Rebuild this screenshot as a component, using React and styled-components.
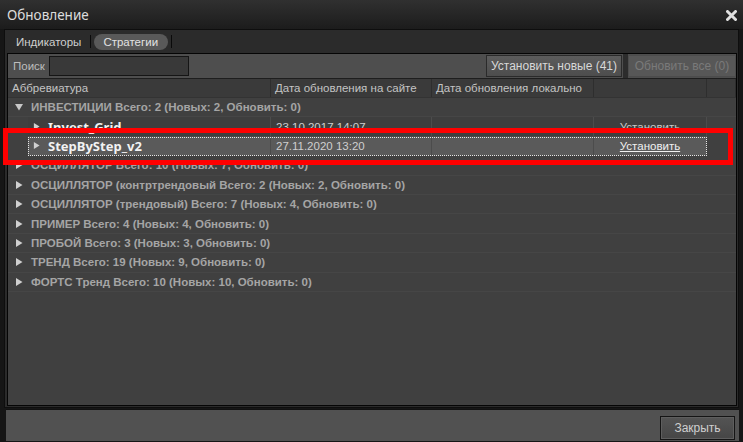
import React from 'react'
import styled, { createGlobalStyle, css } from 'styled-components'

const GlobalStyle = createGlobalStyle`
  html, body {
    margin: 0;
    padding: 0;
    background: #141414;
  }
  body {
    font-family: 'Liberation Sans', Arial, sans-serif;
    font-size: 12px;
    color: #d0d0d0;
  }
  * {
    box-sizing: border-box;
  }
`

const Window = styled.div`
  position: relative;
  width: 743px;
  height: 442px;
  display: flex;
  flex-direction: column;
  background: #161616;
  overflow: hidden;
`

const TitleBar = styled.div`
  height: 29px;
  flex: none;
  display: flex;
  align-items: center;
  justify-content: space-between;
  padding: 0 6px 0 7px;
  background: linear-gradient(#303030, #1c1c1c);
  color: #dcdcdc;
  font-family: 'Noto Sans', sans-serif;
  font-size: 13.5px;
`

const CloseIcon = styled.svg`
  width: 11px;
  height: 11px;
  margin-top: 1px;
`

const Body = styled.div`
  flex: 1;
  display: flex;
  flex-direction: column;
  gap: 1px;
  padding: 0 4px 1px 4px;
  min-height: 0;
`

const Main = styled.div`
  flex: 1;
  display: flex;
  flex-direction: column;
  background: #2b2b2b;
  border: 1px solid #0e0e0e;
  min-height: 0;
`

const TabRow = styled.div`
  height: 23px;
  flex: none;
  display: flex;
  align-items: center;
  padding-left: 5px;
`

const Tab = styled.div`
  height: 16px;
  display: flex;
  align-items: center;
  padding: 0 6px;
  border-radius: 8px;
  color: #cfcfcf;
  font-size: 11.5px;
  ${({ $active }) =>
    $active &&
    css`
      background: #595959;
      color: #e2e2e2;
      padding: 0 10px 0 9px;
    `}
`

const TabSep = styled.div`
  width: 1px;
  height: 13px;
  margin: 0 3px;
  background: #0a0a0a;
`

const Panel = styled.div`
  flex: 1;
  display: flex;
  flex-direction: column;
  margin: 0 1px 1px 2px;
  border: 1px solid #050505;
  background: #404040;
  min-height: 0;
`

const Toolbar = styled.div`
  height: 25px;
  flex: none;
  display: flex;
  align-items: center;
  padding-left: 5px;
  background: #4e4e4e;
  border-bottom: 1px solid #1e1e1e;
`

const Label = styled.span`
  color: #bdbdbd;
  font-size: 11.5px;
  margin-right: 4px;
`

const SearchInput = styled.input`
  width: 140px;
  height: 20px;
  background: #393939;
  border: 1px solid #151515;
  outline: none;
  color: #ddd;
`

const Spacer = styled.div`
  flex: 1;
`

const Button = styled.button`
  width: ${({ $w }) => $w}px;
  height: 22px;
  padding: 0;
  font-family: 'Liberation Sans', Arial, sans-serif;
  font-size: 12px;
  color: #d8d8d8;
  background: linear-gradient(#5c5c5c, #4d4d4d);
  border: 1px solid #2a2a2a;
  ${({ $disabled }) =>
    $disabled &&
    css`
      color: #7a7a7a;
      background: #575757;
      border-color: #4c4c4c;
    `}
`

const ToolSep = styled.div`
  width: 5px;
  height: 24px;
  background: #2c2c2c;
  margin: 0 0 0 1px;
`

const Table = styled.div`
  flex: 1;
  display: flex;
  flex-direction: column;
  min-height: 0;
`

const HeaderRow = styled.div`
  height: 19px;
  flex: none;
  display: grid;
  grid-template-columns: 263px 161px 162px 113px 1fr;
  background: #3a3a3a;
  border-bottom: 1px solid #333;
`

const HeaderCell = styled.div`
  display: flex;
  align-items: center;
  padding-left: 4px;
  color: #c4c4c4;
  font-size: 11.5px;
  white-space: nowrap;
  border-right: 1px solid #2e2e2e;
`

const GroupRow = styled.div`
  height: 19.4px;
  flex: none;
  display: flex;
  align-items: center;
  padding-left: 7px;
  gap: 8px;
  color: #a5a5a5;
  font-weight: bold;
  font-size: 11.5px;
  white-space: nowrap;
  border-bottom: 1px solid #464646;
`

const ItemRow = styled.div`
  height: 19.4px;
  flex: none;
  display: grid;
  grid-template-columns: 243px 161px 162px 113px;
  margin-left: 20px;
  width: 679px;
  background: ${({ $selected }) => ($selected ? '#5a5a5a' : '#3e3e3e')};
  outline: ${({ $selected }) => ($selected ? '1px dotted #e6e6e6' : 'none')};
  outline-offset: -1px;
  border-bottom: 1px solid #4a4a4a;
`

const Cell = styled.div`
  display: flex;
  align-items: center;
  justify-content: ${({ $center }) => ($center ? 'center' : 'flex-start')};
  padding-left: ${({ $center }) => ($center ? '0' : '5px')};
  gap: 8px;
  border-right: 1px solid #4c4c4c;
  color: #cfcfcf;
  font-size: 11.5px;
  white-space: nowrap;
  overflow: hidden;
`

const Name = styled.span`
  color: #f2f2f2;
  font-family: 'Noto Sans', sans-serif;
  font-weight: bold;
  font-size: 13px;
`

const Link = styled.span`
  color: ${({ $active }) => ($active ? '#f0f0f0' : '#c8c8c8')};
  text-decoration: ${({ $active }) => ($active ? 'underline' : 'none')};
`

const Arrow = styled.svg`
  flex: none;
  width: ${({ $size }) => $size}px;
  height: ${({ $size }) => $size}px;
`

const Footer = styled.div`
  height: 32px;
  flex: none;
  display: flex;
  align-items: center;
  justify-content: flex-end;
  padding: 4px 4px 0 0;
  margin-left: 2px;
  background: #515151;
  border-top: 1px solid #111;
`

const CloseButton = styled.button`
  width: 75px;
  height: 24px;
  font-family: 'Liberation Sans', Arial, sans-serif;
  font-size: 12px;
  color: #cfcfcf;
  background: linear-gradient(#545454, #464646);
  border: 1px solid #151515;
  box-shadow: inset 0 0 0 1px #5e5e5e;
`

const Highlight = styled.div`
  position: absolute;
  left: 3px;
  top: 128px;
  width: 730px;
  height: 37px;
  border: 5px solid #ff0000;
  pointer-events: none;
`

const Tri = ({ open, size = 8 }) => (
  <Arrow $size={size} viewBox="0 0 8 8">
    {open ? (
      <polygon points="0,1 8,1 4,7.5" fill="#c8c8c8" />
    ) : (
      <polygon points="1,0 7.5,4 1,8" fill="#d0d0d0" />
    )}
  </Arrow>
)

const groups = [
  'ОСЦИЛЛЯТОР Всего: 10 (Новых: 7, Обновить: 0)',
  'ОСЦИЛЛЯТОР (контртрендовый Всего: 2 (Новых: 2, Обновить: 0)',
  'ОСЦИЛЛЯТОР (трендовый) Всего: 7 (Новых: 4, Обновить: 0)',
  'ПРИМЕР Всего: 4 (Новых: 4, Обновить: 0)',
  'ПРОБОЙ Всего: 3 (Новых: 3, Обновить: 0)',
  'ТРЕНД Всего: 19 (Новых: 9, Обновить: 0)',
  'ФОРТС Тренд Всего: 10 (Новых: 10, Обновить: 0)',
]

const items = [
  { name: 'Invest_Grid', date: '23.10.2017 14:07' },
  { name: 'StepByStep_v2', date: '27.11.2020 13:20', selected: true },
]

export default function App() {
  return (
    <Window>
      <GlobalStyle />
      <TitleBar>
        <span>Обновление</span>
        <CloseIcon viewBox="0 0 11 11">
          <path d="M1.5 1.5 L9.5 9.5 M9.5 1.5 L1.5 9.5" stroke="#e0e0e0" strokeWidth="3" strokeLinecap="round" />
        </CloseIcon>
      </TitleBar>
      <Body>
        <Main>
          <TabRow>
            <Tab>Индикаторы</Tab>
            <TabSep />
            <Tab $active>Стратегии</Tab>
            <TabSep />
          </TabRow>
          <Panel>
            <Toolbar>
              <Label>Поиск</Label>
              <SearchInput />
              <Spacer />
              <Button $w={136}>Установить новые (41)</Button>
              <ToolSep />
              <Button $w={108} $disabled>
                Обновить все (0)
              </Button>
            </Toolbar>
            <Table>
              <HeaderRow>
                <HeaderCell>Аббревиатура</HeaderCell>
                <HeaderCell>Дата обновления на сайте</HeaderCell>
                <HeaderCell>Дата обновления локально</HeaderCell>
                <HeaderCell />
                <HeaderCell />
              </HeaderRow>
              <GroupRow>
                <Tri open />
                ИНВЕСТИЦИИ Всего: 2 (Новых: 2, Обновить: 0)
              </GroupRow>
              {items.map((it) => (
                <ItemRow key={it.name} $selected={it.selected}>
                  <Cell>
                    <Tri size={7} />
                    <Name>{it.name}</Name>
                  </Cell>
                  <Cell>{it.date}</Cell>
                  <Cell />
                  <Cell $center>
                    <Link $active={it.selected}>Установить</Link>
                  </Cell>
                </ItemRow>
              ))}
              {groups.map((g) => (
                <GroupRow key={g}>
                  <Tri />
                  {g}
                </GroupRow>
              ))}
            </Table>
          </Panel>
        </Main>
        <Footer>
          <CloseButton>Закрыть</CloseButton>
        </Footer>
      </Body>
      <Highlight />
    </Window>
  )
}
